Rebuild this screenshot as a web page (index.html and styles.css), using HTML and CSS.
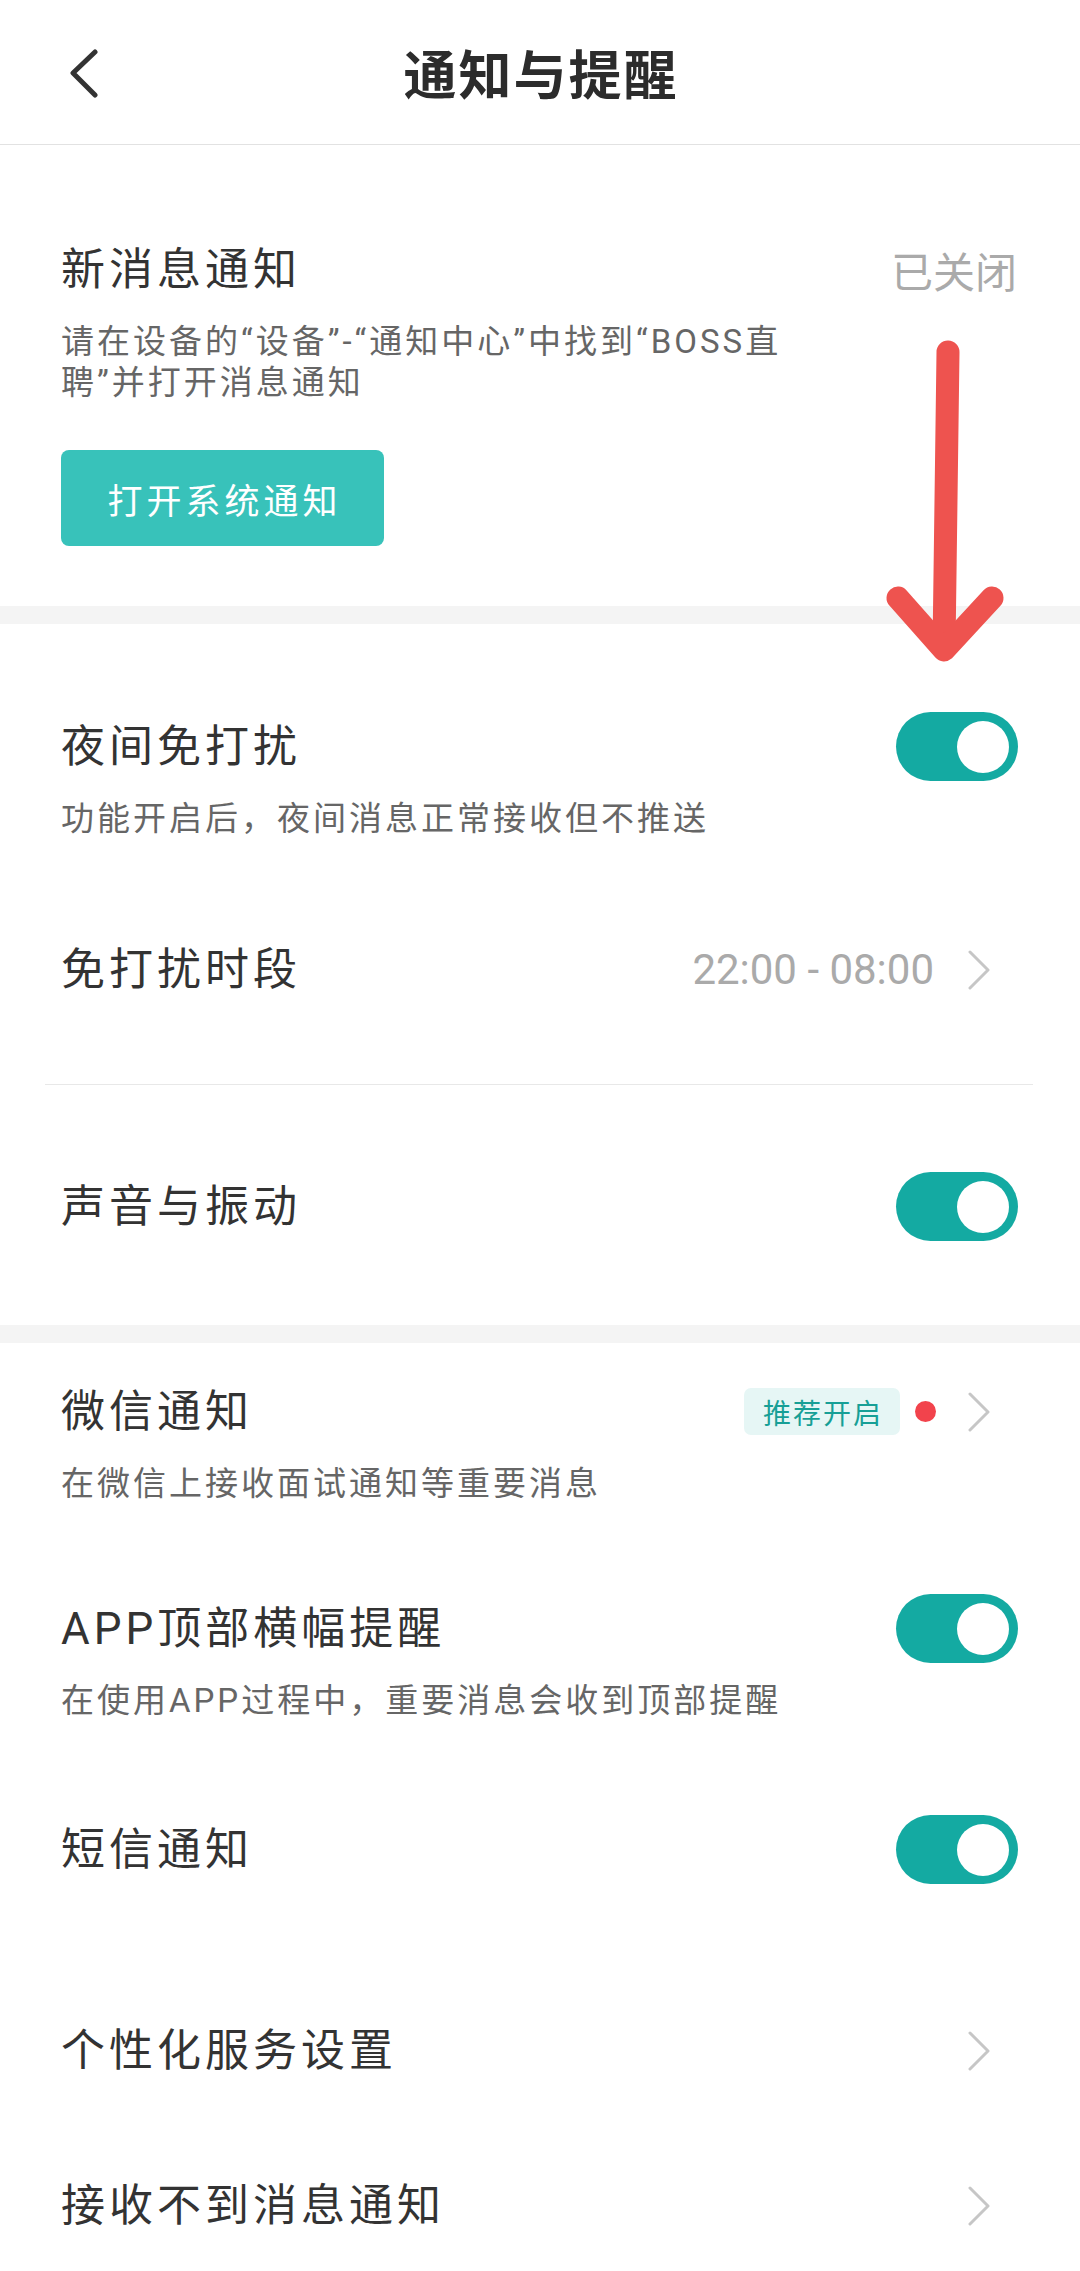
FILE: index.html
```html
<!DOCTYPE html>
<html lang="zh-CN">
<head>
<meta charset="utf-8">
<title>通知与提醒</title>
<link rel="stylesheet" href="styles.css">
</head>
<body>
<div class="page">
  <header class="nav">
    <div class="nav-left">
      <svg class="back" width="30" height="50" viewBox="0 0 30 50"><polyline points="25,4 3,25 25,47"/></svg>
    </div>
    <h1 class="nav-title">通知与提醒</h1>
    <div class="nav-right"></div>
  </header>

  <section class="group group-first">
    <div class="item item-news">
      <div class="item-head">
        <span class="label">新消息通知</span>
        <span class="status">已关闭</span>
      </div>
      <p class="desc">请在设备的“设备”-“通知中心”中找到“BOSS直<br>聘”并打开消息通知</p>
      <button class="open-btn">打开系统通知</button>
    </div>
  </section>

  <div class="band"></div>

  <section class="group">
    <div class="item item-night">
      <div class="item-head">
        <span class="label">夜间免打扰</span>
        <span class="switch"><span class="knob"></span></span>
      </div>
      <p class="desc">功能开启后，夜间消息正常接收但不推送</p>
    </div>
    <div class="item item-period">
      <div class="item-head">
        <span class="label">免打扰时段</span>
        <span class="trail">
          <span class="time">22:00 - 08:00</span>
          <svg class="chev" width="24" height="40" viewBox="0 0 24 40"><polyline points="3,2 21,20 3,38"/></svg>
        </span>
      </div>
    </div>
    <div class="divider"></div>
    <div class="item item-sound">
      <div class="item-head">
        <span class="label">声音与振动</span>
        <span class="switch"><span class="knob"></span></span>
      </div>
    </div>
  </section>

  <div class="band"></div>

  <section class="group">
    <div class="item item-wechat">
      <div class="item-head">
        <span class="label">微信通知</span>
        <span class="trail">
          <span class="badge">推荐开启</span>
          <span class="dot"></span>
          <svg class="chev chev-dot" width="24" height="40" viewBox="0 0 24 40"><polyline points="3,2 21,20 3,38"/></svg>
        </span>
      </div>
      <p class="desc">在微信上接收面试通知等重要消息</p>
    </div>
    <div class="item item-banner">
      <div class="item-head">
        <span class="label">APP顶部横幅提醒</span>
        <span class="switch"><span class="knob"></span></span>
      </div>
      <p class="desc">在使用APP过程中，重要消息会收到顶部提醒</p>
    </div>
    <div class="item item-sms">
      <div class="item-head">
        <span class="label">短信通知</span>
        <span class="switch"><span class="knob"></span></span>
      </div>
    </div>
    <div class="item item-personal">
      <div class="item-head">
        <span class="label">个性化服务设置</span>
        <svg class="chev" width="24" height="40" viewBox="0 0 24 40"><polyline points="3,2 21,20 3,38"/></svg>
      </div>
    </div>
    <div class="item item-missing">
      <div class="item-head">
        <span class="label">接收不到消息通知</span>
        <svg class="chev" width="24" height="40" viewBox="0 0 24 40"><polyline points="3,2 21,20 3,38"/></svg>
      </div>
    </div>
  </section>

  <svg class="annotation" width="1080" height="700" viewBox="0 0 1080 700">
    <path d="M948 352 L944 648"/>
    <path d="M898 598 L944 650 L992 598"/>
  </svg>
</div>
</body>
</html>
```

FILE: styles.css
```css
* {
  box-sizing: border-box;
}

html, body {
  margin: 0;
  padding: 0;
  background: #ffffff;
}

body {
  font-family: "Roboto", "Noto Sans CJK SC", sans-serif;
  color: #333333;
}

.page {
  position: relative;
  width: 1080px;
  min-height: 2271px;
  background: #ffffff;
  overflow: hidden;
}

/* header */
.nav {
  display: grid;
  grid-template-columns: 1fr auto 1fr;
  align-items: center;
  height: 145px;
  border-bottom: 1px solid #e2e2e2;
}

.nav-left {
  padding-left: 70px;
  display: flex;
  align-items: center;
  padding-top: 2px;
}

.back polyline {
  fill: none;
  stroke: #333333;
  stroke-width: 5;
  stroke-linecap: round;
  stroke-linejoin: round;
}

.nav-title {
  margin: 0;
  font-family: "Noto Sans CJK SC", sans-serif;
  font-size: 53px;
  font-weight: 700;
  letter-spacing: 2px;
  padding-left: 2px;
  color: #2c2c2c;
  line-height: 1;
}

/* groups */
.group {
  display: flex;
  flex-direction: column;
}

.band {
  height: 18px;
  background: #f4f4f4;
}

.item {
  padding: 0 62px 0 61px;
}

.item-head {
  display: flex;
  align-items: center;
  justify-content: space-between;
  height: 69px;
}

.label {
  font-family: "Roboto", "Noto Sans CJK SC", sans-serif;
  font-size: 44px;
  letter-spacing: 4px;
  color: #333333;
  line-height: 1;
  white-space: nowrap;
}

.status {
  font-family: "Noto Sans CJK SC", sans-serif;
  font-size: 42px;
  color: #aaaaaa;
  line-height: 1;
  margin-right: 1px;
}

.desc {
  margin: 17px 0 0;
  font-size: 33px;
  letter-spacing: 3px;
  line-height: 41px;
  color: #666666;
  white-space: nowrap;
}

.open-btn {
  display: block;
  margin-top: 47px;
  width: 323px;
  height: 96px;
  border: none;
  border-radius: 8px;
  background: #38c2ba;
  color: #ffffff;
  font-family: "Noto Sans CJK SC", sans-serif;
  font-size: 35px;
  letter-spacing: 4px;
  padding: 0 0 0 4px;
  line-height: 1;
}

/* item spacing */
.item-news { padding-top: 90px; padding-bottom: 60px; }
.item-night { padding-top: 88px; padding-bottom: 48px; }
.item-period { padding-top: 48px; padding-bottom: 80px; }
.item-sound { padding-top: 87px; padding-bottom: 84px; }
.item-wechat { padding-top: 34px; padding-bottom: 45px; }
.item-banner { padding-top: 45px; padding-bottom: 47px; }
.item-sms { padding-top: 47px; padding-bottom: 66px; }
.item-personal { padding-top: 66px; padding-bottom: 43px; }
.item-missing { padding-top: 43px; padding-bottom: 28px; }

.divider {
  height: 1px;
  background: #e8e8e8;
  margin: 0 47px 0 45px;
}

/* switch */
.switch {
  display: flex;
  justify-content: flex-end;
  align-items: center;
  width: 122px;
  height: 69px;
  border-radius: 35px;
  background: #14aaa2;
  padding-right: 9px;
}

.knob {
  width: 52px;
  height: 52px;
  border-radius: 50%;
  background: #ffffff;
}

/* trailing */
.trail {
  display: flex;
  align-items: center;
}

.time {
  font-family: "Roboto", sans-serif;
  font-size: 42px;
  color: #aaaaaa;
  margin-right: 33px;
  line-height: 1;
}

.chev {
  display: block;
  margin-right: 27px;
}

.chev polyline {
  fill: none;
  stroke: #c6c6c6;
  stroke-width: 3;
  stroke-linecap: round;
  stroke-linejoin: round;
}

.badge {
  display: flex;
  align-items: center;
  height: 47px;
  padding: 0 17px 0 19px;
  background: #e6f6f5;
  border-radius: 7px;
  font-family: "Noto Sans CJK SC", sans-serif;
  font-size: 28px;
  letter-spacing: 2px;
  color: #179f96;
}

.dot {
  width: 21px;
  height: 21px;
  border-radius: 50%;
  background: #f2434c;
  margin-left: 15px;
}

.chev-dot {
  margin-left: 31px;
}

/* annotation overlay */
.annotation {
  position: absolute;
  left: 0;
  top: 0;
  pointer-events: none;
}

.annotation path {
  fill: none;
  stroke: #ee534f;
  stroke-width: 23;
  stroke-linecap: round;
  stroke-linejoin: round;
}
```
